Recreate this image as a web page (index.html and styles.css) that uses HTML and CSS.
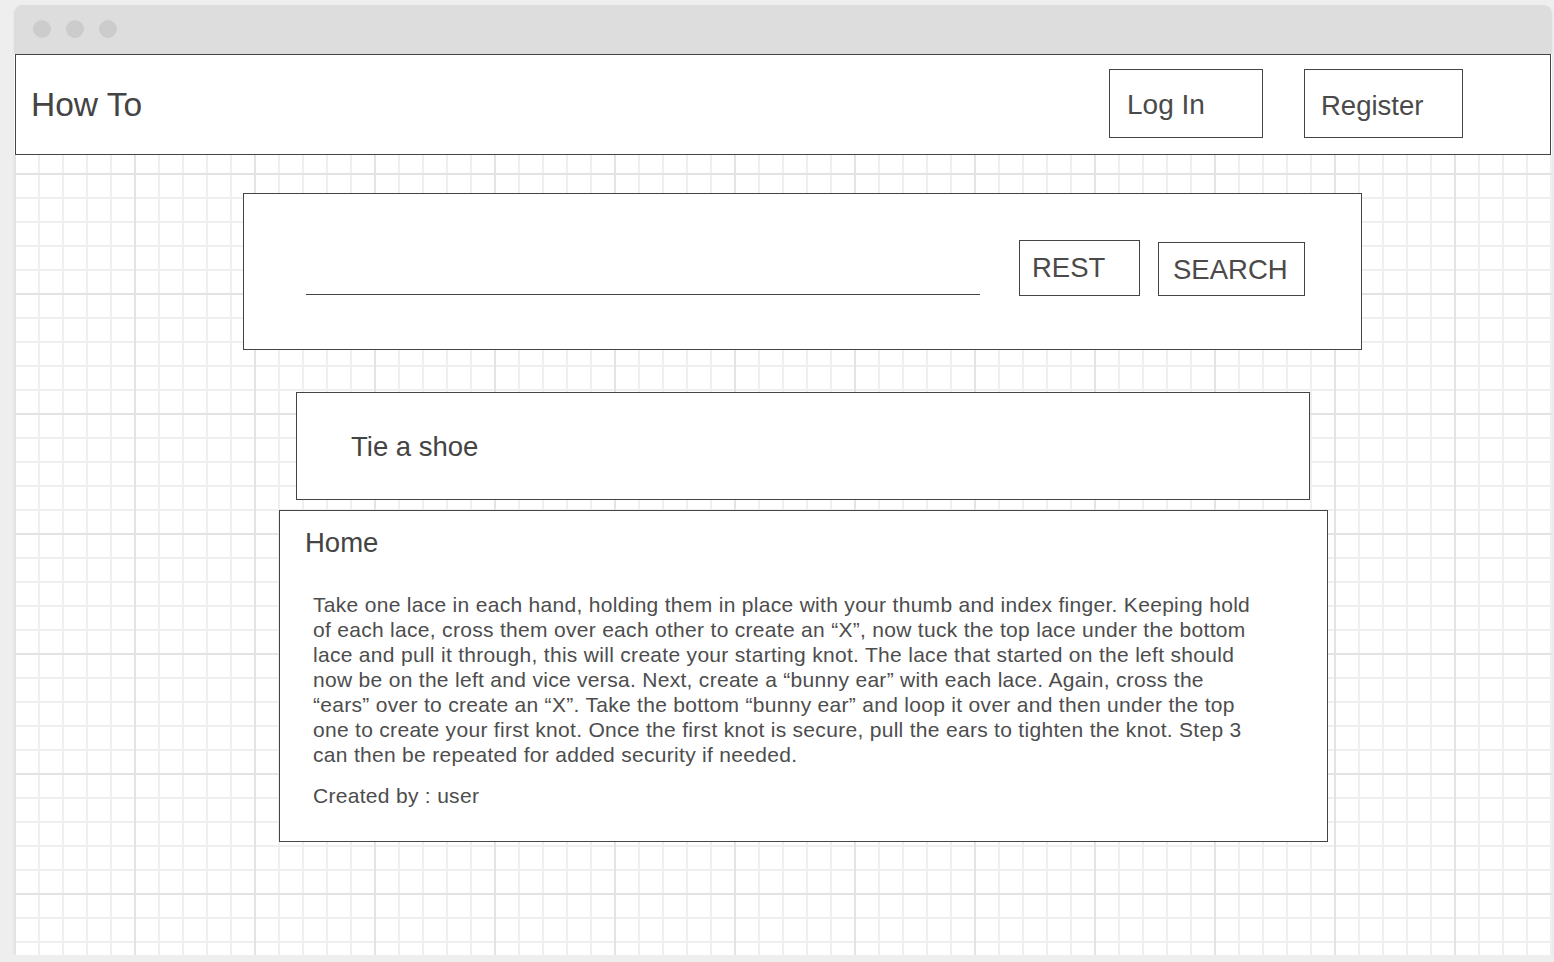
FILE: index.html
```html
<!DOCTYPE html>
<html lang="en">
<head>
<meta charset="utf-8">
<title>How To</title>
<link rel="stylesheet" href="styles.css">
</head>
<body>
<div class="window">
  <div class="titlebar">
    <span class="dot"></span><span class="dot"></span><span class="dot"></span>
  </div>
  <header class="header">
    <div class="brand">How To</div>
    <nav class="nav">
      <button class="nav-btn login">Log In</button>
      <button class="nav-btn register">Register</button>
    </nav>
  </header>
  <main class="content">
    <section class="search-panel">
      <div class="search-field"></div>
      <button class="box-btn rest">REST</button>
      <button class="box-btn search">SEARCH</button>
    </section>
    <section class="title-card">Tie a shoe</section>
    <section class="detail-card">
      <h2 class="detail-title">Home</h2>
      <p class="detail-text">Take one lace in each hand, holding them in place with your thumb and index finger. Keeping hold of each lace, cross them over each other to create an “X”, now tuck the top lace under the bottom lace and pull it through, this will create your starting knot. The lace that started on the left should now be on the left and vice versa. Next, create a “bunny ear” with each lace. Again, cross the “ears” over to create an “X”. Take the bottom “bunny ear” and loop it over and then under the top one to create your first knot. Once the first knot is secure, pull the ears to tighten the knot. Step 3 can then be repeated for added security if needed.</p>
      <p class="detail-author">Created by : user</p>
    </section>
  </main>
</div>
</body>
</html>
```
FILE: styles.css
```css
* { box-sizing: border-box; }

body {
  margin: 0;
  background: #eeeeee;
  font-family: "Liberation Sans", Arial, sans-serif;
  color: #444;
}

.window {
  margin: 5px 0 0 14px;
  width: 1538px;
  height: 950px;
  background: #fff;
  border-radius: 8px 8px 0 0;
  overflow: hidden;
  display: flex;
  flex-direction: column;
  box-shadow: 0 1px 2px rgba(0,0,0,0.08);
}

.titlebar {
  height: 49px;
  flex: none;
  background: #dddddd;
  display: flex;
  gap: 15px;
  padding: 15px 0 0 19px;
}

.dot {
  width: 18px;
  height: 18px;
  border-radius: 50%;
  background: #cccccc;
}

.header {
  flex: none;
  margin: 0 1px;
  height: 101px;
  border: 1px solid #444;
  background: #fff;
  display: flex;
  align-items: center;
}

.brand {
  margin-left: 15px;
  font-size: 33.5px;
  color: #444;
}

.nav {
  margin-left: auto;
  margin-right: 87px;
  display: flex;
  gap: 41px;
  align-self: flex-start;
  margin-top: 14px;
}

.nav-btn {
  font-family: inherit;
  background: #fff;
  border: 1px solid #444;
  color: #4a4a4a;
  font-size: 27.5px;
  height: 69px;
  text-align: left;
  display: flex;
  align-items: center;
  padding: 0;
}

.login { width: 154px; padding-left: 17px; padding-top: 3px; font-size: 28px; }
.register { width: 159px; padding-left: 16px; padding-top: 5px; }

.content {
  flex: 1;
  display: flex;
  flex-direction: column;
  align-items: flex-start;
  padding-top: 38px;
  background-color: #fff;
  background-image:
    linear-gradient(to right, #e3e3e3 2px, transparent 2px),
    linear-gradient(to bottom, #e3e3e3 2px, transparent 2px),
    linear-gradient(to right, #efefef 2px, transparent 2px),
    linear-gradient(to bottom, #efefef 2px, transparent 2px);
  background-size: 120px 120px, 120px 120px, 24px 24px, 24px 24px;
  background-position: 0 0, 0 18px, 0 0, 0 18px;
}

.search-panel {
  margin-left: 229px;
  width: 1119px;
  height: 157px;
  border: 1px solid #444;
  background: #fff;
  display: flex;
  align-items: flex-start;
}

.search-field {
  margin-left: 62px;
  margin-top: 100px;
  width: 674px;
  height: 1px;
  border-top: 1px solid #444;
}

.box-btn {
  font-family: inherit;
  background: #fff;
  border: 1px solid #444;
  color: #4a4a4a;
  font-size: 27.5px;
  display: flex;
  align-items: center;
  padding: 0;
}

.rest {
  margin-left: 39px;
  margin-top: 46px;
  width: 121px;
  height: 56px;
  padding-left: 12px;
}

.search {
  margin-left: 18px;
  margin-top: 48px;
  width: 147px;
  height: 54px;
  padding-left: 14px;
  padding-top: 2px;
}

.title-card {
  margin-left: 282px;
  margin-top: 42px;
  width: 1014px;
  height: 108px;
  border: 1px solid #444;
  background: #fff;
  display: flex;
  align-items: center;
  padding-left: 54px;
  padding-top: 2px;
  font-size: 27.5px;
  color: #444;
}

.detail-card {
  margin-left: 265px;
  margin-top: 10px;
  width: 1049px;
  height: 332px;
  border: 1px solid #444;
  background: #fff;
  padding: 17px 0 0 25px;
}

.detail-title {
  margin: 0;
  font-weight: normal;
  font-size: 27.5px;
  line-height: 30px;
  color: #444;
}

.detail-text {
  margin: 34px 0 0 8px;
  width: 940px;
  font-size: 21px;
  letter-spacing: 0.3px;
  line-height: 25px;
  color: #4d4d4d;
}

.detail-author {
  margin: 16px 0 0 8px;
  font-size: 21px;
  letter-spacing: 0.3px;
  line-height: 25px;
  color: #4d4d4d;
}
```
